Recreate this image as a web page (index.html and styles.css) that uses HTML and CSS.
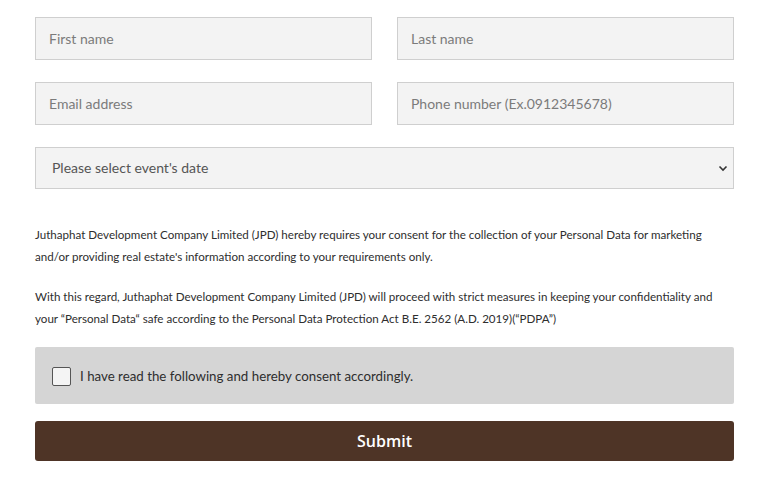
FILE: index.html
```html
<!DOCTYPE html>
<html>
<head>
<meta charset="utf-8">
<link rel="stylesheet" href="styles.css">
</head>
<body>
<form class="form">
  <div class="row">
    <input class="field" type="text" placeholder="First name">
    <input class="field" type="text" placeholder="Last name">
  </div>
  <div class="row">
    <input class="field" type="text" placeholder="Email address">
    <input class="field" type="text" placeholder="Phone number (Ex.0912345678)">
  </div>
  <div class="select">
    <span class="select-text">Please select event's date</span>
    <svg class="chev" width="10" height="7" viewBox="0 0 10 7"><path d="M1.5 1.5 L5 5 L8.5 1.5" fill="none" stroke="#333" stroke-width="1.6"/></svg>
  </div>
  <div class="legal">
    <p>Juthaphat Development Company Limited (JPD) hereby requires your consent for the collection of your Personal Data for marketing and/or providing real estate's information according to your requirements only.</p>
    <p>With this regard, Juthaphat Development Company Limited (JPD) will proceed with strict measures in keeping your confidentiality and your “Personal Data“ safe according to the Personal Data Protection Act B.E. 2562 (A.D. 2019)(“PDPA”)</p>
  </div>
  <label class="consent">
    <span class="box"></span>
    <span>I have read the following and hereby consent accordingly.</span>
  </label>
  <button class="submit" type="button">Submit</button>
</form>
</body>
</html>
```
FILE: styles.css
```css
* { box-sizing: border-box; }
html, body { margin: 0; background: #fff; }
body { font-family: Lato, "Open Sans", sans-serif; }
.form {
  width: 699px;
  margin: 17px 0 0 35px;
  display: flex;
  flex-direction: column;
}
.row {
  display: grid;
  grid-template-columns: 337px 337px;
  column-gap: 25px;
  margin-bottom: 22px;
}
.field {
  height: 43px;
  border: 1px solid #cfcfcf;
  background: #f3f3f3;
  padding: 0 13px;
  font-family: Lato, sans-serif;
  font-size: 14px;
  color: #333;
  outline: none;
}
.field::placeholder { color: #7b7b7b; }
.select {
  height: 42px;
  border: 1px solid #cfcfcf;
  background: #f3f3f3;
  display: flex;
  align-items: center;
  justify-content: space-between;
  padding: 0 5px 2px 16px;
  font-size: 14px;
  color: #555;
}
.chev { margin-top: 2px; }
.legal {
  margin-top: 35px;
  font-size: 11.6px;
  color: #2e2e2e;
  line-height: 22px;
}
.legal p { margin: 0 0 18px; }
.legal p:last-child { margin-bottom: 17px; }
.consent {
  height: 57px;
  background: #d5d5d5;
  border-radius: 2px;
  display: flex;
  align-items: center;
  padding-left: 17px;
  font-size: 13.3px;
  color: #2e2e2e;
  gap: 9px;
}
.box {
  width: 19px;
  height: 19px;
  background: #f4f4f4;
  border: 1px solid #555;
  border-radius: 2px;
  margin-top: 1px;
}
.submit {
  margin-top: 17px;
  height: 40px;
  border: none;
  border-radius: 3px;
  background: #4e3426;
  color: #fff;
  font-family: "Open Sans", sans-serif;
  font-weight: 600;
  font-size: 16px;
}
```
